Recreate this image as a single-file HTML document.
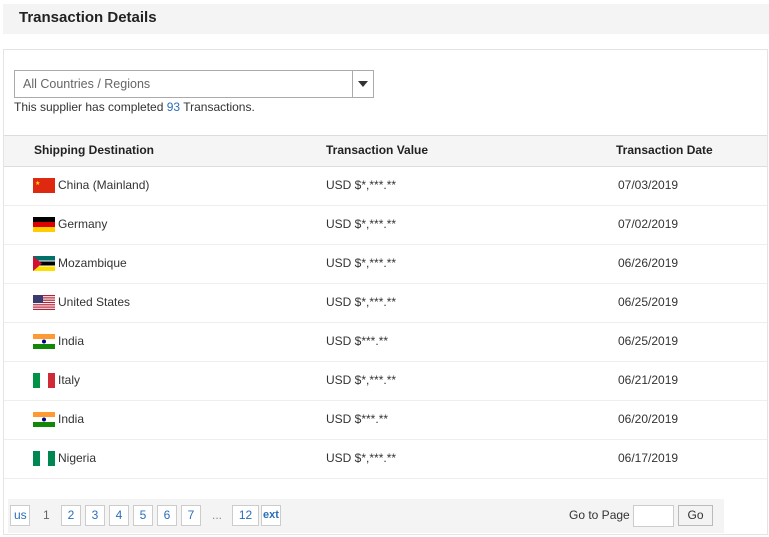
<!DOCTYPE html>
<html><head><style>
*{margin:0;padding:0;box-sizing:border-box}
body{width:769px;height:537px;background:#fff;font-family:"Liberation Sans",Arial,sans-serif;color:#333;position:relative;overflow:hidden;font-size:12px}
.abs{position:absolute}
.hd{left:3px;top:4px;width:766px;height:30px;background:#f4f4f4}
.hd span{position:absolute;left:16px;top:5px;font-size:15px;font-weight:bold;color:#222}
.panel{left:3px;top:49px;width:765px;height:486px;border:1px solid #e4e4e4}
.sel{left:14px;top:70px;width:360px;height:28px;border:1px solid #aaa;background:#fff}
.sel span{position:absolute;left:8px;top:6px;color:#666;font-size:12.5px}
.sel i{position:absolute;right:0;top:0;width:21px;height:26px;border-left:1px solid #aaa}
.sel i:after{content:"";position:absolute;left:5px;top:10px;border-left:5px solid transparent;border-right:5px solid transparent;border-top:6px solid #333}
.th{left:4px;top:135px;width:763px;height:32px;background:#f5f5f5;border-top:1px solid #ddd;border-bottom:1px solid #ddd}
.th b{position:absolute;top:7px;font-size:12px;color:#222}
.row{left:4px;width:763px;height:39px;border-bottom:1px solid #eee}
.row span{position:absolute;top:11px;font-size:12px;color:#333}
.flag{position:absolute;left:29px;top:11px;width:22px;height:15px}
.pg{left:8px;top:499px;width:716px;height:34px;background:#f4f4f4}
.b{position:absolute;top:6px;height:21px;border:1px solid #ccc;background:#fff;color:#2a6ebb;font-size:12px;text-align:center;line-height:19px}
</style></head><body>
<div class="abs hd"><span>Transaction Details</span></div>
<div class="abs panel"></div>
<div class="abs sel"><span>All Countries / Regions</span><i></i></div>
<div class="abs" style="left:14px;top:100px;font-size:12px">This supplier has completed <span style="color:#2a6ebb">93</span> Transactions.</div>
<div class="abs th"><b style="left:30px">Shipping Destination</b><b style="left:322px">Transaction Value</b><b style="left:612px">Transaction Date</b></div>

<div class="abs row" style="top:167px"><svg class="flag" viewBox="0 0 22 15"><rect width="22" height="15" fill="#de2910"/><text x="2" y="7" font-size="6" fill="#ffde00">★</text></svg><span style="left:54px">China (Mainland)</span><span style="left:322px">USD $*,***.**</span><span style="left:614px">07/03/2019</span></div>
<div class="abs row" style="top:206px"><svg class="flag" viewBox="0 0 22 15"><rect width="22" height="5" fill="#000"/><rect y="5" width="22" height="5" fill="#d00"/><rect y="10" width="22" height="5" fill="#ffce00"/></svg><span style="left:54px">Germany</span><span style="left:322px">USD $*,***.**</span><span style="left:614px">07/02/2019</span></div>
<div class="abs row" style="top:245px"><svg class="flag" viewBox="0 0 22 15"><rect width="22" height="5" fill="#007168"/><rect y="5" width="22" height="5" fill="#000"/><rect y="10" width="22" height="5" fill="#fce100"/><rect y="4.5" width="22" height="1" fill="#fff"/><rect y="9.5" width="22" height="1" fill="#fff"/><polygon points="0,0 9,7.5 0,15" fill="#d21034"/></svg><span style="left:54px">Mozambique</span><span style="left:322px">USD $*,***.**</span><span style="left:614px">06/26/2019</span></div>
<div class="abs row" style="top:284px"><svg class="flag" viewBox="0 0 22 15"><rect width="22" height="15" fill="#fff"/><g fill="#b22234"><rect y="0" width="22" height="1.2"/><rect y="2.3" width="22" height="1.2"/><rect y="4.6" width="22" height="1.2"/><rect y="6.9" width="22" height="1.2"/><rect y="9.2" width="22" height="1.2"/><rect y="11.5" width="22" height="1.2"/><rect y="13.8" width="22" height="1.2"/></g><rect width="10" height="8" fill="#3c3b6e"/></svg><span style="left:54px">United States</span><span style="left:322px">USD $*,***.**</span><span style="left:614px">06/25/2019</span></div>
<div class="abs row" style="top:323px"><svg class="flag" viewBox="0 0 22 15"><rect width="22" height="5" fill="#f93"/><rect y="5" width="22" height="5" fill="#fff"/><rect y="10" width="22" height="5" fill="#138808"/><circle cx="11" cy="7.5" r="2" fill="#008"/></svg><span style="left:54px">India</span><span style="left:322px">USD $***.**</span><span style="left:614px">06/25/2019</span></div>
<div class="abs row" style="top:362px"><svg class="flag" viewBox="0 0 22 15"><rect width="7" height="15" fill="#009246"/><rect x="7" width="8" height="15" fill="#fff"/><rect x="15" width="7" height="15" fill="#ce2b37"/></svg><span style="left:54px">Italy</span><span style="left:322px">USD $*,***.**</span><span style="left:614px">06/21/2019</span></div>
<div class="abs row" style="top:401px"><svg class="flag" viewBox="0 0 22 15"><rect width="22" height="5" fill="#f93"/><rect y="5" width="22" height="5" fill="#fff"/><rect y="10" width="22" height="5" fill="#138808"/><circle cx="11" cy="7.5" r="2" fill="#008"/></svg><span style="left:54px">India</span><span style="left:322px">USD $***.**</span><span style="left:614px">06/20/2019</span></div>
<div class="abs row" style="top:440px"><svg class="flag" viewBox="0 0 22 15"><rect width="7" height="15" fill="#008751"/><rect x="7" width="8" height="15" fill="#fff"/><rect x="15" width="7" height="15" fill="#008751"/></svg><span style="left:54px">Nigeria</span><span style="left:322px">USD $*,***.**</span><span style="left:614px">06/17/2019</span></div>

<div class="abs pg">
<div class="b" style="left:2px;width:20px;text-align:left;padding-left:3px;overflow:hidden">us</div>
<div class="abs" style="left:35px;top:9px;color:#666">1</div>
<div class="b" style="left:53px;width:20px">2</div>
<div class="b" style="left:77px;width:20px">3</div>
<div class="b" style="left:101px;width:20px">4</div>
<div class="b" style="left:125px;width:20px">5</div>
<div class="b" style="left:149px;width:20px">6</div>
<div class="b" style="left:173px;width:20px">7</div>
<div class="abs" style="left:204px;top:9px;color:#888">...</div>
<div class="b" style="left:224px;width:27px">12</div>
<div class="b" style="left:253px;width:20px;font-size:11px;font-weight:bold">ext</div>
<div class="abs" style="left:561px;top:9px;color:#333">Go to Page</div>
<div class="abs" style="left:625px;top:6px;width:41px;height:22px;border:1px solid #ccc;background:#fff"></div>
<div class="abs" style="left:670px;top:6px;width:35px;height:21px;border:1px solid #bbb;background:#f3f3f3;text-align:center;line-height:19px;color:#333">Go</div>
</div>
</body></html>
